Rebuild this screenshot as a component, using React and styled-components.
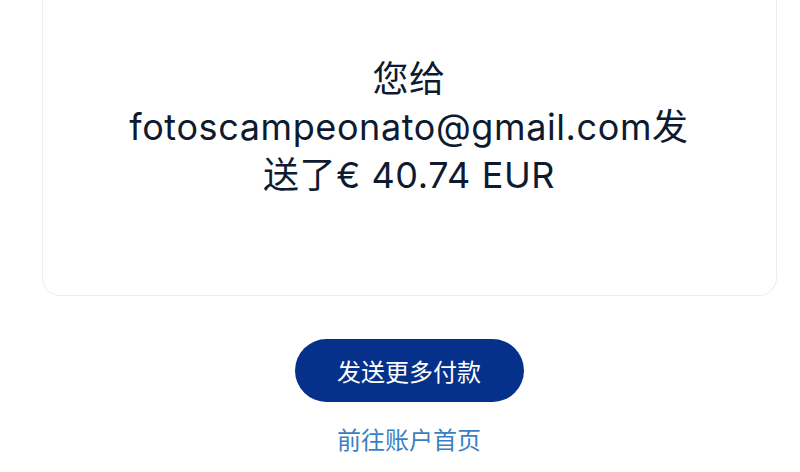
import React from "react";
import styled, { createGlobalStyle } from "styled-components";

const Global = createGlobalStyle`
  html, body { margin: 0; padding: 0; background: #ffffff; }
  body { font-family: "Inter", "Noto Sans CJK SC", sans-serif; overflow: hidden; }
`;

const Page = styled.div`
  box-sizing: border-box;
  width: 800px;
  height: 472px;
  padding-left: 18px;
  display: flex;
  flex-direction: column;
  align-items: center;
  overflow: hidden;
`;

const Card = styled.section`
  box-sizing: border-box;
  flex-shrink: 0;
  width: 735px;
  height: 336px;
  margin-top: -40px;
  border: 1px solid #ececec;
  border-radius: 18px;
  background: #fff;
  display: flex;
  align-items: flex-start;
  justify-content: center;
  padding-top: 94px;
`;

const Message = styled.h1`
  margin: 0;
  max-width: 590px;
  text-align: center;
  font-family: "Inter", "Noto Sans CJK SC", sans-serif;
  font-weight: 400;
  font-size: 36px;
  line-height: 48px;
  color: #0e1a30;
  letter-spacing: 0.6px;
`;

const Actions = styled.div`
  display: flex;
  flex-direction: column;
  align-items: center;
  margin-top: 43px;
  gap: 19px;
`;

const PrimaryButton = styled.button`
  width: 229px;
  height: 63px;
  border: none;
  border-radius: 32px;
  background: #06318a;
  color: #fff;
  font-family: "Noto Sans CJK SC", sans-serif;
  font-size: 24px;
  line-height: 1;
  padding: 0;
  cursor: pointer;
`;

const TextLink = styled.a`
  font-family: "Noto Sans CJK SC", sans-serif;
  font-size: 24px;
  line-height: 36px;
  color: #3a7fc4;
  text-decoration: none;
`;

export default function App() {
  return (
    <>
      <Global />
      <Page>
        <Card>
          <Message>您给 fotoscampeonato@gmail.com发送了€ 40.74 EUR</Message>
        </Card>
        <Actions>
          <PrimaryButton>发送更多付款</PrimaryButton>
          <TextLink href="#">前往账户首页</TextLink>
        </Actions>
      </Page>
    </>
  );
}
